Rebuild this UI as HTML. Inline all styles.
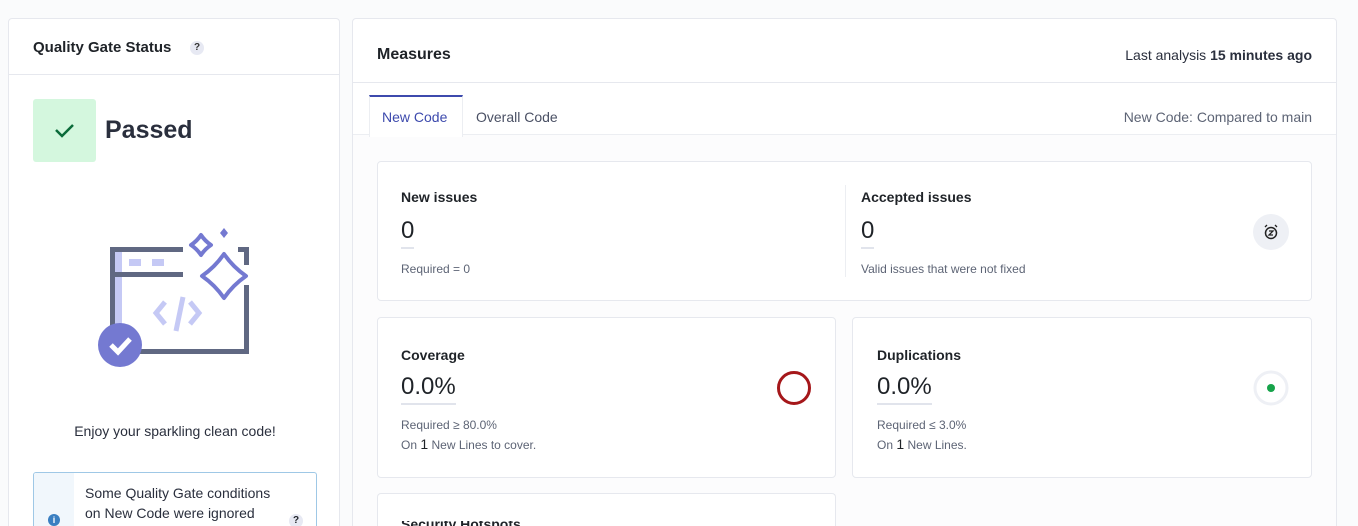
<!DOCTYPE html>
<html><head><meta charset="utf-8"><style>
*{box-sizing:border-box;margin:0;padding:0}
html,body{width:1358px;height:526px;overflow:hidden}
body{background:#fafbfc;font-family:"Liberation Sans",sans-serif;color:#1f2328;position:relative}
.card{position:absolute;background:#fff;border:1px solid #e6e8ee;border-radius:4px;overflow:hidden}
.t{position:absolute;white-space:nowrap}
.sub{color:#5d6475;font-size:12px}
.big{font-size:24px;color:#1f2328;border-bottom:2px solid #e1e4ec;padding-bottom:2px}
.h{font-size:14px;font-weight:bold;color:#1f2328}
</style></head><body>
<div class="card" style="left:8px;top:18px;width:332px;height:508px;border-bottom:none;border-radius:4px 4px 0 0">
  <div class="t h" style="left:24px;top:20px;font-size:15px">Quality Gate Status</div>
  <div class="t" style="left:181px;top:22px;width:14px;height:14px;border-radius:7px;background:#e7e9f3;font-size:10px;font-weight:bold;text-align:center;line-height:14px;color:#333">?</div>
  <div style="position:absolute;left:0;right:0;top:55px;border-top:1px solid #e6e8ee"></div>
  <div style="position:absolute;left:24px;top:80px;width:63px;height:63px;background:#d4f7de;border-radius:3px">
    <svg width="63" height="63"><path d="M23 31 L29 37 L40 26" stroke="#0b6b3a" stroke-width="2.5" fill="none"/></svg></div>
  <div class="t" style="left:96px;top:97px;font-size:25px;font-weight:bold;color:#2a2f3d">Passed</div>
  <div class="t" style="left:0;width:332px;text-align:center;top:404px;font-size:14px;color:#2a2f3d">Enjoy your sparkling clean code!</div>
  <div style="position:absolute;left:24px;top:453px;width:284px;height:55px;border:1px solid #9fc8e6;border-bottom:none;border-radius:3px 3px 0 0;background:#fff;overflow:hidden">
    <div style="position:absolute;left:0;top:0;width:40px;height:80px;background:#f1f7fc"></div>
    <div class="t" style="left:14px;top:41px;width:12px;height:12px;border-radius:6px;background:#3a7fc1;color:#fff;font-size:9px;font-weight:bold;text-align:center;line-height:12px">i</div>
    <div class="t" style="left:51px;top:10px;font-size:14px;line-height:20px;color:#2a2f3d">Some Quality Gate conditions<br>on New Code were ignored</div>
    <div class="t" style="left:255px;top:41px;width:14px;height:14px;border-radius:7px;background:#e7e9f3;font-size:10px;font-weight:bold;text-align:center;line-height:14px">?</div>
  </div>
</div>
<svg style="position:absolute;left:0;top:0" width="340" height="400">
  <rect x="114" y="252" width="8" height="100" fill="#c5c9f5"/>
  <rect x="129" y="259" width="12" height="7" fill="#c5c9f5"/><rect x="152" y="259" width="12" height="7" fill="#c5c9f5"/>
  <path d="M183 249.5 H112.5 V351.5 H246.5 V285 M246.5 265 V249.5 H238" stroke="#606882" stroke-width="5" fill="none"/>
  <path d="M112 274.5 H183" stroke="#606882" stroke-width="5"/>
  <path d="M165 302 L156 313 L165 324 M190 302 L199 313 L190 324" stroke="#c5c9f5" stroke-width="5" fill="none"/>
  <path d="M183 297 L176 331" stroke="#c5c9f5" stroke-width="5"/>
  <g stroke="#7479d1" stroke-width="4" fill="none" stroke-linejoin="round">
    <path d="M201 235 Q205 241 211 245 Q205 249 201 255 Q197 249 191 245 Q197 241 201 235 Z"/>
    <path d="M224 254 Q233 267 246 276 Q233 285 224 298 Q215 285 202 276 Q215 267 224 254 Z"/>
  </g>
  <path d="M224 228 L228 233 L224 238 L220 233 Z" fill="#7479d1"/>
  <circle cx="120" cy="345" r="22" fill="#7479d1"/>
  <path d="M111 345 L118 352 L130 339" stroke="#fff" stroke-width="5" fill="none"/>
</svg>
<div class="card" style="left:352px;top:18px;width:985px;height:508px;border-bottom:none;border-radius:4px 4px 0 0">
  <div class="t" style="left:24px;top:27px;font-size:16px;font-weight:bold">Measures</div>
  <div class="t" style="right:24px;top:28px;font-size:14px;color:#2a2f3d">Last analysis <b>15 minutes ago</b></div>
  <div style="position:absolute;left:0;right:0;top:63px;height:445px;border-top:1px solid #e6e8ee;background:#fcfcfd"></div>
  <div style="position:absolute;left:0;right:0;top:64px;height:52px;background:#fff;border-bottom:1px solid #eceef2"></div>
  <div style="position:absolute;left:16px;top:76px;width:94px;height:42px;background:#fff;border:1px solid #eceef2;border-top:2px solid #3d4aad;border-bottom:none"></div>
  <div class="t" style="left:29px;top:90px;font-size:14px;color:#3d4aad">New Code</div>
  <div class="t" style="left:123px;top:90px;font-size:14px;color:#4a5064">Overall Code</div>
  <div class="t" style="right:24px;top:90px;font-size:14px;color:#5d6475">New Code: Compared to main</div>
</div>
<div class="card" style="left:377px;top:161px;width:935px;height:140px;">
  <div class="t h" style="left:23px;top:27px">New issues</div>
  <div class="t big" style="left:23px;top:55px">0</div>
  <div class="t sub" style="left:23px;top:100px">Required = 0</div>
  <div style="position:absolute;left:467px;top:23px;height:92px;border-left:1px solid #eceef2"></div>
  <div class="t h" style="left:483px;top:27px">Accepted issues</div>
  <div class="t big" style="left:483px;top:55px">0</div>
  <div class="t sub" style="left:483px;top:100px">Valid issues that were not fixed</div>
  <div style="position:absolute;left:875px;top:52px;width:36px;height:36px;border-radius:18px;background:#eef0f5">
    <svg width="36" height="36"><circle cx="18" cy="19" r="5.5" stroke="#222" stroke-width="1.5" fill="none"/><path d="M16 17h4l-4 4h4M12 13l2-2M24 13l-2-2" stroke="#222" stroke-width="1.3" fill="none"/></svg></div>
</div>
<div class="card" style="left:377px;top:317px;width:459px;height:161px;">
  <div class="t h" style="left:23px;top:29px">Coverage</div>
  <div class="t big" style="left:23px;top:55px">0.0%</div>
  <div class="t sub" style="left:23px;top:100px">Required ≥ 80.0%</div>
  <div class="t sub" style="left:23px;top:118px">On <span style="font-size:14px;color:#1f2328">1</span> New Lines to cover.</div>
  <svg style="position:absolute;left:397px;top:51px" width="38" height="38"><circle cx="19" cy="19" r="15.5" stroke="#a5171a" stroke-width="3" fill="none"/></svg>
</div>
<div class="card" style="left:852px;top:317px;width:460px;height:161px;">
  <div class="t h" style="left:24px;top:29px">Duplications</div>
  <div class="t big" style="left:24px;top:55px">0.0%</div>
  <div class="t sub" style="left:24px;top:100px">Required ≤ 3.0%</div>
  <div class="t sub" style="left:24px;top:118px">On <span style="font-size:14px;color:#1f2328">1</span> New Lines.</div>
  <svg style="position:absolute;left:399px;top:51px" width="38" height="38"><circle cx="19" cy="19" r="16" stroke="#eef0f5" stroke-width="3" fill="none"/><circle cx="19" cy="19" r="4" fill="#16a34a"/></svg>
</div>
<div class="card" style="left:377px;top:493px;width:459px;height:33px;border-bottom:none;border-radius:4px 4px 0 0">
  <div class="t h" style="left:23px;top:27px;font-size:14px;line-height:6px;height:6px;overflow:hidden">Security Hotspots</div>
</div>
</body></html>
